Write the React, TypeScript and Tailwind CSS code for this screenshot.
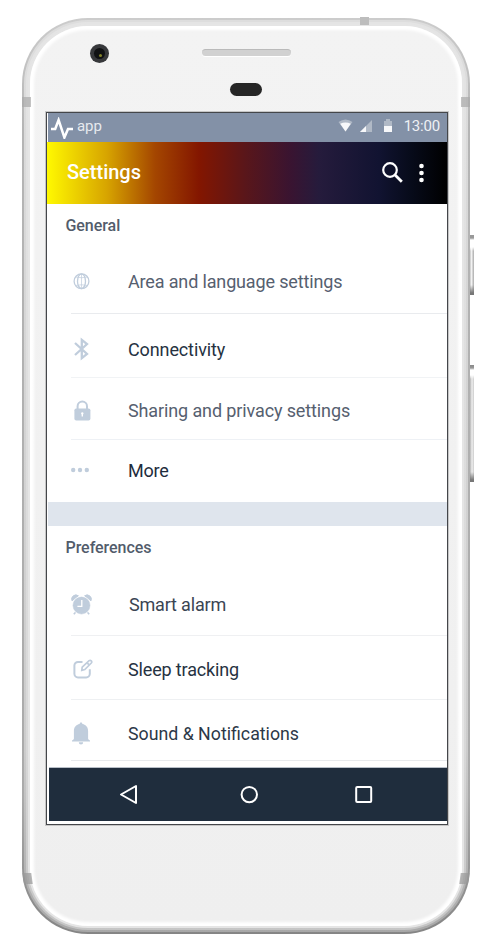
import type { ReactNode } from "react";

const tint = "#c0cddc";

const GlobeIcon = () => (
  <svg className="ml-0.5 block" width="17" height="17" viewBox="0 0 17 17" fill="none" stroke={tint} strokeWidth="1.3">
    <circle cx="8.5" cy="8.2" r="7.4" />
    <ellipse cx="8.5" cy="8.2" rx="4" ry="7.4" />
    <path d="M8.5 1v15M2.6 4Q8.5 5.500 14.4 4M2.6 12.500Q8.5 11 14.4 12.500" strokeWidth="0.7" />
  </svg>
);

const BluetoothIcon = () => (
  <svg className="ml-[3px] block" width="15" height="24" viewBox="0 0 15 24" fill="none" stroke={tint} strokeWidth="2.3">
    <path d="M1 6l12 11-5.2 4.200V2.800L13 7 1 18" />
  </svg>
);

const LockIcon = () => (
  <svg className="ml-[3px] block" width="17" height="21" viewBox="0 0 17 21">
    <path d="M3.600 9V6.200a4.700 4.700 0 0 1 9.400 0V9" fill="none" stroke={tint} strokeWidth="2" />
    <rect x="0.4" y="8.4" width="16" height="12.200" rx="1.8" fill={tint} />
    <path d="M8.300 12.200a1.200 1.200 0 0 1 .7 2.200v2H7.600v-2a1.200 1.200 0 0 1 .7-2.200z" fill="#fff" />
  </svg>
);

const DotsIcon = () => (
  <svg className="mb-px block" width="19" height="6" viewBox="0 0 19 6" fill={tint}>
    <circle cx="2.2" cy="3" r="2.2" />
    <circle cx="9" cy="3" r="2.2" />
    <circle cx="15.8" cy="3" r="2.2" />
  </svg>
);

const AlarmIcon = () => (
  <svg className="block" width="21" height="21" viewBox="0 0 21 21">
    <path d="M1 6.800A4.200 4.200 0 0 1 7.400 1.800zM20 6.800A4.200 4.200 0 0 0 13.600 1.800z" fill={tint} stroke={tint} strokeWidth="1" />
    <path d="M4.600 18.200l-1.800 2M16.400 18.200l1.800 2" stroke={tint} strokeWidth="1.6" />
    <circle cx="10.500" cy="11.400" r="9" fill={tint} stroke="#fff" strokeWidth="0.6" />
    <path d="M10.800 6v6.400H6.400" fill="none" stroke="#fff" strokeWidth="1.3" />
  </svg>
);

const EditIcon = () => (
  <svg className="ml-0.5 block" width="20" height="20" viewBox="0 0 20 20" fill="none" stroke={tint}>
    <path d="M9.500 3H5a3.600 3.600 0 0 0-3.600 3.600v8.200A3.600 3.600 0 0 0 5 18.400h8.200a3.600 3.600 0 0 0 3.600-3.600v-4.600" strokeWidth="2" />
    <path d="M8.800 11.400l.4-3.200 6.900-6.500a1.600 1.600 0 0 1 2.200 2.300l-6.500 6.600zM14 3.700l2.300 2.500" strokeWidth="1.7" />
  </svg>
);

const BellIcon = () => (
  <svg className="ml-px block" width="18" height="23" viewBox="0 0 18 23" fill={tint}>
    <path d="M9 .5c1 0 1.300.6 1.400 1.600 3.700.7 5.700 3.400 5.700 6.800v7.600c0 .9.500 1.400 1.900 2v1H0v-1c1.400-.6 1.900-1.100 1.900-2V8.900c0-3.400 2-6.100 5.700-6.800C7.700 1.100 8 .5 9 .5z" />
    <path d="M6.800 20.200h4.400a2.200 2.200 0 0 1-4.400 0z" />
  </svg>
);

type RowProps = {
  icon: ReactNode;
  label: string;
  box: string;
  text: string;
  line?: string;
};

const Row = ({ icon, label, box, text, line = "border-transparent" }: RowProps) => (
  <div className={`ml-6 flex shrink-0 items-center border-b ${line} ${box}`}>
    <div className="w-[57px] shrink-0">{icon}</div>
    <span className={`whitespace-nowrap pt-px leading-6 ${text}`}>{label}</span>
  </div>
);

const SectionTitle = ({ children }: { children: string }) => (
  <h2 className="flex h-[46px] shrink-0 items-center pb-[3px] pl-[18.5px] text-[16px] font-medium tracking-[-0.05px] text-[#525c6b]">
    {children}
  </h2>
);

const StatusBar = () => (
  <div className="ml-px flex h-[29px] shrink-0 items-center bg-[#8391a7] pb-[4px] pr-[7px] text-white">
    <svg className="ml-[3px] mt-[4px] block" width="22" height="22" viewBox="0 0 22 22" fill="none" stroke="#fff" strokeWidth="2.500">
      <path d="M0 12h4.200L7.600 3l5.800 17.500L17 12h5" />
    </svg>
    <span className="ml-[4px] text-[15px] leading-5 tracking-[-0.1px] text-[#e6e9ee]">app</span>
    <div className="ml-auto flex items-center">
      <svg className="block" width="15" height="13" viewBox="0 0 15 13">
        <path d="M0.500 3Q7.500-2 14.500 3L7.500 12.500z" fill="#b0b9c6" />
        <path d="M2.200 4.800Q7.500 2 12.800 4.800L7.500 12.500z" fill="#f7f8fa" />
      </svg>
      <svg className="ml-[7px] block" width="12" height="12" viewBox="0 0 12 12">
        <path d="M12 0v12H0z" fill="#b0b9c6" />
        <path d="M6 6v6H0z" fill="#f7f8fa" />
      </svg>
      <svg className="ml-[12px] block" width="8" height="14" viewBox="0 0 8 14">
        <path d="M0 2h2V0h4v2h2v11H0z" fill="#b0b9c6" />
        <path d="M0 7h8v6H0z" fill="#f7f8fa" />
      </svg>
      <span className="ml-[12px] text-[15px] leading-5 tracking-[-0.2px] text-[#eef0f4]">13:00</span>
    </div>
  </div>
);

const Header = () => (
  <header className="flex h-[62px] shrink-0 items-center bg-[linear-gradient(90deg,#fff900_0%,#d7a400_15%,#a44600_27%,#831600_38%,#58161b_50%,#391431_61%,#251b3c_68%,#111331_83%,#070b1a_91%,#000_100%)] pl-5 pr-[23px] text-white">
    <h1 className="pb-[3px] text-[20px] font-medium leading-6">Settings</h1>
    <svg className="-mt-[2px] ml-auto block" width="21" height="21" viewBox="0 0 21 21" fill="none" stroke="#fff">
      <circle cx="8" cy="8" r="6.800" strokeWidth="2.200" />
      <path d="M12.800 12.800l7 7" strokeWidth="2.800" />
    </svg>
    <svg className="ml-[16px] block" width="5" height="20" viewBox="0 0 5 20" fill="#fff">
      <circle cx="2.500" cy="3" r="2.300" />
      <circle cx="2.500" cy="10" r="2.300" />
      <circle cx="2.500" cy="17" r="2.300" />
    </svg>
  </header>
);

const NavBar = () => (
  <nav className="ml-0.5 flex h-[53px] shrink-0 items-center bg-[#1f2d3d] pl-[70px] shadow-[0_-1px_0_#b8bfc8]">
    <svg className="block" width="19" height="21" viewBox="0 0 19 21" fill="none" stroke="#fff" strokeWidth="2">
      <path d="M17 2v17L2 10.500z" strokeLinejoin="round" />
    </svg>
    <svg className="ml-[102px] block" width="20" height="20" viewBox="0 0 20 20" fill="none" stroke="#fff" strokeWidth="2">
      <circle cx="9.300" cy="9.600" r="7.700" />
    </svg>
    <svg className="ml-[94px] block" width="20" height="20" viewBox="0 0 20 20" fill="none" stroke="#fff" strokeWidth="2">
      <rect x="2.200" y="2" width="15" height="15" rx="1" />
    </svg>
  </nav>
);

const Screen = () => (
  <div className="ml-[15px] flex h-[715px] w-[404px] shrink-0 flex-col overflow-hidden border border-[#c6c6c6]">
    <div className="flex h-full flex-col overflow-hidden border border-[#44464a] bg-white">
      <StatusBar />
      <Header />
      <SectionTitle>General</SectionTitle>
      <Row icon={<GlobeIcon />} label="Area and language settings" box="h-16" text="text-[18px] tracking-[-0.150px] text-[#56606f]" line="border-[#e9ebee]" />
      <Row icon={<BluetoothIcon />} label="Connectivity" box="h-[64px] pt-[7px]" text="text-[18px] tracking-[-0.120px] text-[#263241]" line="border-[#f1f3f5]" />
      <Row icon={<LockIcon />} label="Sharing and privacy settings" box="h-[62px] pt-[3px]" text="text-[18px] tracking-[-0.120px] text-[#56606f]" line="border-[#eef1f5]" />
      <Row icon={<DotsIcon />} label="More" box="h-[62px]" text="text-[18px] tracking-[-0.250px] text-[#1f2d3d]" />
      <div className="ml-px h-6 shrink-0 bg-[#dfe5ed]" />
      <SectionTitle>Preferences</SectionTitle>
      <Row icon={<AlarmIcon />} label="Smart alarm" box="h-16 pt-px" text="ml-px text-[18px] tracking-[-0.180px] text-[#3a4553]" line="border-[#eff0f2]" />
      <Row icon={<EditIcon />} label="Sleep tracking" box="h-[64px] pt-[3px]" text="text-[18px] tracking-[-0.150px] text-[#263241]" line="border-[#eef0f2]" />
      <Row icon={<BellIcon />} label="Sound & Notifications" box="h-[61px] pt-[7px]" text="text-[17.750px] text-[#2c3847]" line="border-[#e8eaed]" />
      <div className="h-[7px] shrink-0" />
      <NavBar />
    </div>
  </div>
);

export default function App() {
  return (
    <div className="relative h-[952px] w-[491px] overflow-hidden bg-white pl-[22px] pt-[18px] font-[Roboto,sans-serif]">
      <div className="absolute left-[469px] top-[235px] h-[60px] w-[5px] bg-[linear-gradient(180deg,#999_0,#999_3px,#fff_5px,#fff_12px,transparent_16px,transparent_50px,#777_58px),linear-gradient(90deg,#aaa,#f2f2f2_50%,#aaa)]" />
      <div className="absolute left-[469px] top-[365px] h-[117px] w-[5px] bg-[linear-gradient(180deg,#888_0,#999_3px,#fff_5px,#fff_10px,transparent_14px,transparent_107px,#777_115px),linear-gradient(90deg,#999,#eee_60%,#ccc)]" />
      <div className="relative h-[916px] w-[448px] overflow-hidden rounded-[66px] bg-[linear-gradient(180deg,#ccc_0%,#b5b5b5_12%,#aaa_85%,#858585_100%)] p-[2px]">
        <div className="h-full rounded-[64px] bg-[linear-gradient(180deg,#ddd_0%,#ccc_80%,#a8a8a8_100%)] p-[2px]">
          <div className="h-full rounded-[62px] bg-[linear-gradient(180deg,#e4e4e4_0%,#d8d8d8_80%,#c5c5c5_100%)] p-[2px]">
            <div className="h-full rounded-[60px] bg-[#e5e5e5] p-[2px]">
              <div className="flex h-full flex-col rounded-[58px] bg-[linear-gradient(180deg,#f3f3f3,#efefef)] shadow-[inset_0_0_3px_4px_#fff]">
                <div className="relative h-[85px] shrink-0">
                  <div className="absolute left-[60px] top-[18px] flex size-[19px] items-center justify-center rounded-full bg-[#37383b]">
                    <div className="flex size-[11px] items-end justify-center rounded-full bg-[#101113] pb-[2px] pl-0.5">
                      <div className="size-[3px] rounded-full bg-[#83832a]" />
                    </div>
                  </div>
                  <div className="absolute left-[172px] top-[23px] h-[7px] w-[89px] rounded-full border-t border-[#bababa] bg-[#d1d1d1] shadow-[0_1px_0_#fff]" />
                  <div className="absolute left-[200px] top-[57px] h-[13px] w-[32px] rounded-full bg-[#262626]" />
                </div>
                <Screen />
              </div>
            </div>
          </div>
        </div>
        <div className="absolute left-0 top-[79px] h-[10px] w-[9px] bg-[#aaa]/70" />
        <div className="absolute right-0 top-[79px] h-[10px] w-[9px] bg-[#aaa]/70" />
        <div className="absolute left-px top-[855px] h-[11px] w-[9px] skew-x-[8deg] bg-[#999]/70" />
        <div className="absolute right-px top-[855px] h-[11px] w-[9px] skew-x-[-8deg] bg-[#999]/70" />
      </div>
      <div className="absolute left-[360px] top-[17px] h-[8px] w-[9px] bg-[#bdbdbd]" />
    </div>
  );
}
